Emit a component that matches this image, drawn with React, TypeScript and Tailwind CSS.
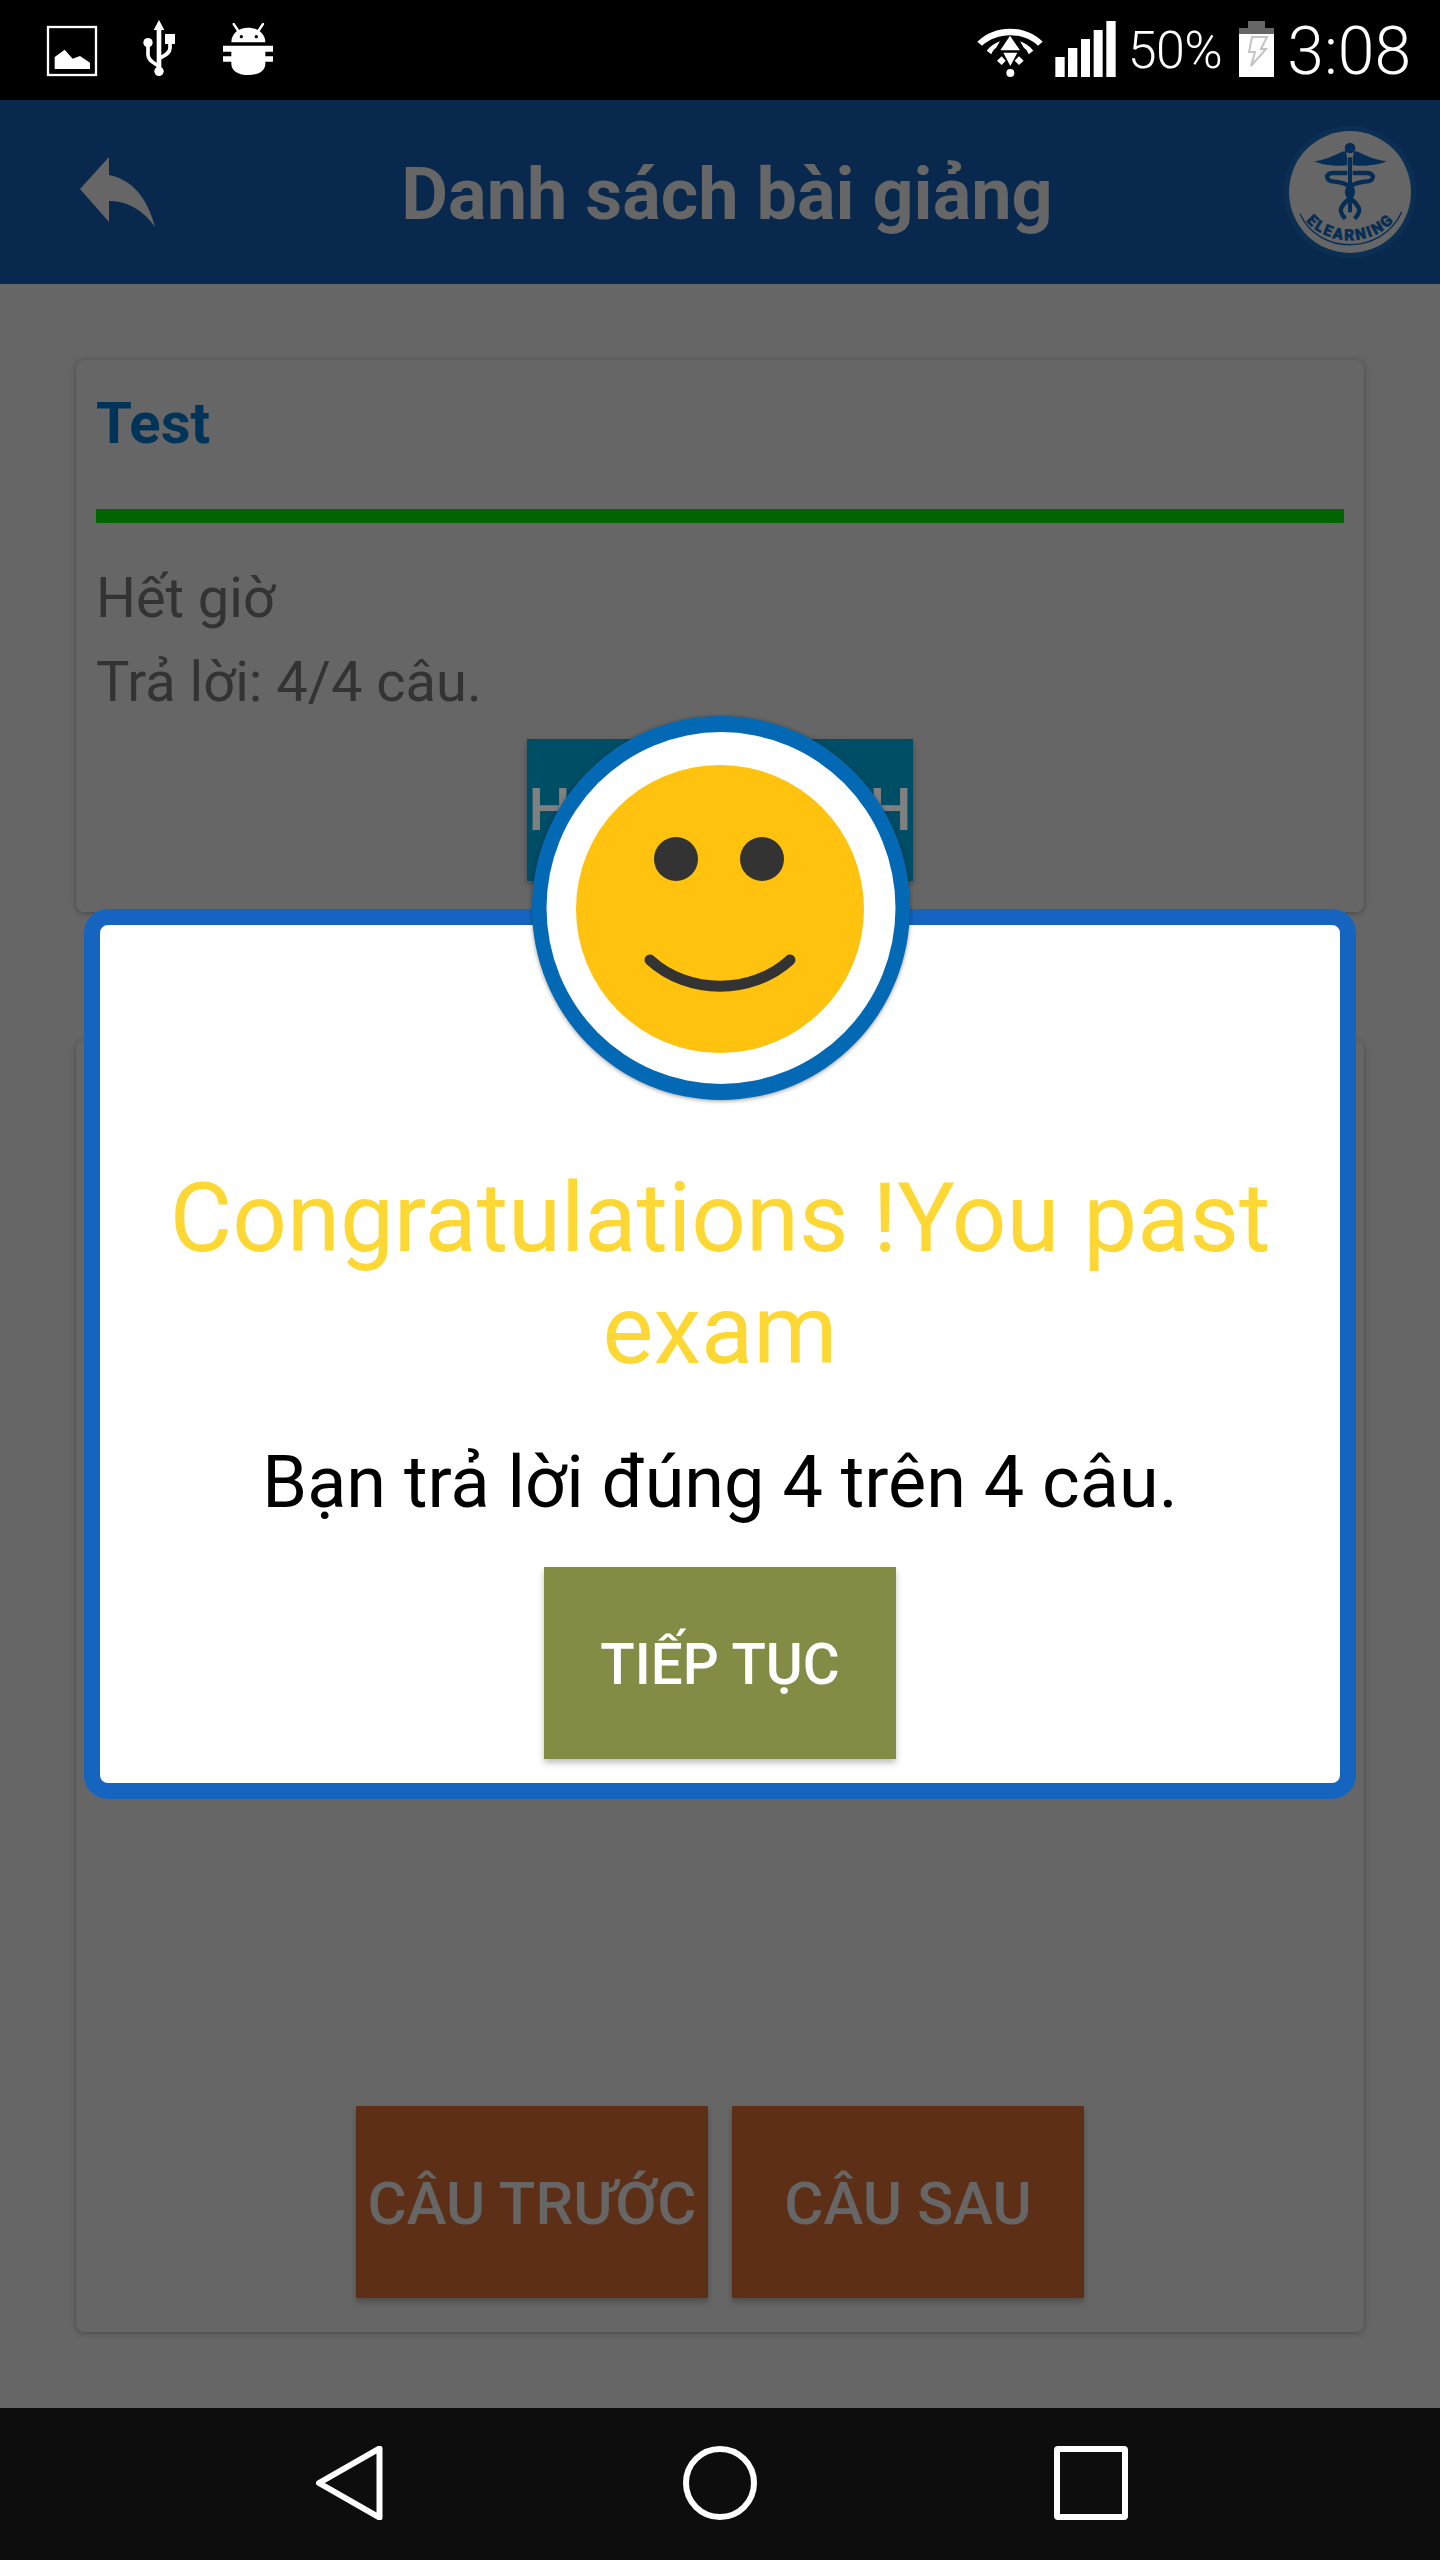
import React from "react";

function LeftStatusIcons() {
  return (
    <div className="flex items-start">
      {/* gallery */}
      <svg width="52" height="52" viewBox="0 0 156 156" className="ml-[46px] mt-[25px]">
        <rect x="6" y="6" width="144" height="144" fill="none" stroke="#fff" strokeWidth="7" />
        <path d="M26 132V96L56 74L80 101L102 93L132 113V132Z" fill="#fff" />
      </svg>
      {/* usb */}
      <svg width="36" height="58" viewBox="0 0 108 174" className="ml-[44px] mt-[20px]">
        <path d="M51 0L67 30H35Z" fill="#fff" />
        <rect x="44" y="26" width="14" height="124" fill="#fff" />
        <circle cx="51" cy="154" r="14" fill="#fff" />
        <circle cx="18" cy="68" r="14" fill="#fff" />
        <path d="M18 76V104C18 122 36 128 50 138" fill="none" stroke="#fff" strokeWidth="11" />
        <rect x="69" y="42" width="30" height="30" fill="#fff" />
        <path d="M84 70V84C84 100 68 106 54 114" fill="none" stroke="#fff" strokeWidth="11" />
      </svg>
      {/* android */}
      <svg width="50" height="54" viewBox="0 0 150 162" className="ml-[45px] mt-[23px]">
        <path d="M25 58C25 30 48 14 75 14C102 14 127 30 127 58Z" fill="#fff" />
        <path d="M32 3L46 24M120 3L106 24" stroke="#fff" strokeWidth="7" strokeLinecap="round" />
        <circle cx="55" cy="41" r="5" fill="#000" />
        <circle cx="100" cy="41" r="5" fill="#000" />
        <path d="M0 68H150V86H127V100H150V116H127V122C127 145 104 156 76 156C48 156 25 145 25 122V116H0V100H25V86H0Z" fill="#fff" />
      </svg>
    </div>
  );
}

function WifiSignal() {
  return (
    <svg width="148" height="70" viewBox="0 0 444 210" className="shrink-0">
      <path d="M22 80C75 28 165 28 218 80L204 92C158 50 82 50 36 92Z" fill="#fff" />
      <path d="M50 107C62 92 76 84 90 79L78 99C72 102 68 108 64 118Z" fill="#fff" />
      <path d="M190 107C178 92 164 84 150 79L162 99C168 102 172 108 176 118Z" fill="#fff" />
      <path d="M120 62L150 106H91Z" fill="#fff" />
      <path d="M100 113H142L121 153Z" fill="#fff" />
      <path d="M95 124L107 137L95 150L81 137Z" fill="#fff" />
      <path d="M147 124L161 137L147 150L134 137Z" fill="#fff" />
      <circle cx="121" cy="174" r="12" fill="#fff" />
      <rect x="256" y="126" width="28" height="60" fill="#fff" />
      <rect x="294" y="99" width="28" height="87" fill="#fff" />
      <rect x="333" y="72" width="27" height="114" fill="#fff" />
      <rect x="371" y="45" width="27" height="141" fill="#fff" />
      <rect x="409" y="18" width="28" height="168" fill="#fff" />
    </svg>
  );
}

function Battery() {
  return (
    <svg width="35" height="56" viewBox="0 0 35 56" className="shrink-0">
      <rect x="9" y="0" width="17" height="7" fill="#666" />
      <rect x="0" y="7" width="35" height="6" fill="#666" />
      <rect x="0" y="13" width="35" height="43" fill="#fff" />
      <path d="M13 16H28L22 28H27L12 45L16 31H10Z" fill="#fff" stroke="#c4c4c4" strokeWidth="2" />
    </svg>
  );
}

function BackArrow() {
  return (
    <svg width="75" height="70" viewBox="0 0 75 70" className="ml-[80px] shrink-0">
      <path d="M0 32L29 0V18C52 22 68 42 75 70C64 54 48 44 29 44V65Z" fill="#666" />
    </svg>
  );
}

function Logo() {
  const c = "#062d55";
  return (
    <svg width="136" height="136" viewBox="0 0 408 408" className="shrink-0">
      <circle cx="204" cy="204" r="199" fill="#0a2f52" />
      <circle cx="204" cy="204" r="183" fill="#666" />
      <circle cx="204" cy="72" r="16" fill={c} />
      <path d="M192 82C170 82 150 106 97 112C120 124 170 128 196 124V104Z" fill={c} />
      <path d="M216 82C238 82 258 106 314 112C290 124 238 128 212 124V104Z" fill={c} />
      <rect x="198" y="100" width="12" height="165" fill={c} />
      <path d="M196 147H152C130 147 130 171 152 172C172 174 190 176 204 188C216 198 216 210 204 222C190 234 176 246 176 260C178 270 184 278 190 284" fill="none" stroke={c} strokeWidth="13" />
      <path d="M212 147H256C278 147 278 171 256 172C236 174 218 176 204 188C192 198 192 210 204 222C218 234 232 246 232 260C230 270 224 278 218 284" fill="none" stroke={c} strokeWidth="13" />
      <defs>
        <path id="logoArc" d="M58 268C112 376 298 376 352 264" />
      </defs>
      <text fontFamily="Roboto, sans-serif" fontWeight="900" fontSize="46" fill={c} stroke={c} strokeWidth="1.5" letterSpacing="6" textAnchor="middle">
        <textPath href="#logoArc" startOffset="50%">ELEARNING</textPath>
      </text>
      <path d="M54 269C110 394 300 394 359 264" fill="none" stroke={c} strokeWidth="4" />
    </svg>
  );
}

function Smiley() {
  return (
    <svg width="386" height="386" viewBox="0 0 386 386" className="drop-shadow-[0_1px_2px_rgba(0,0,0,0.4)]">
      <ellipse cx="193" cy="193" rx="189" ry="192" fill="#0469b5" />
      <ellipse cx="193" cy="193" rx="174.5" ry="176" fill="#fff" />
      <circle cx="192" cy="194" r="144" fill="#fec20f" />
      <circle cx="148" cy="144" r="22" fill="#333" />
      <circle cx="234" cy="144" r="22" fill="#333" />
      <path d="M122 245C160 280 224 280 262 245" fill="none" stroke="#333" strokeWidth="11" strokeLinecap="round" />
    </svg>
  );
}

function NavIcons() {
  return (
    <div className="flex h-[152px] items-center justify-center gap-[297px] bg-[#0d0d0d] pb-[2px]">
      <svg width="74" height="74" viewBox="0 0 74 74">
        <path d="M67.500 2.500V71.500L7 37Z" fill="none" stroke="#fff" strokeWidth="6" strokeLinejoin="round" />
      </svg>
      <svg width="74" height="74" viewBox="0 0 74 74">
        <circle cx="37" cy="37" r="34" fill="none" stroke="#fff" strokeWidth="6" />
      </svg>
      <svg width="74" height="74" viewBox="0 0 74 74">
        <rect x="3" y="3" width="68" height="68" rx="1" fill="none" stroke="#fff" strokeWidth="6" />
      </svg>
    </div>
  );
}

export default function App() {
  return (
    <div className="relative flex h-[2560px] w-[1440px] flex-col overflow-hidden bg-[#666] font-['Roboto',sans-serif]">
      {/* status bar */}
      <div className="flex h-[100px] shrink-0 items-start justify-between bg-black text-white">
        <LeftStatusIcons />
        <div className="flex items-start pr-[29px] pt-[15px]">
          <WifiSignal />
          <span className="mt-[6px] ml-[10px] text-[52px] leading-[60px] font-light tracking-[-0.5px]">50%</span>
          <div className="mt-[6px] ml-[17px]"><Battery /></div>
          <span className="ml-[13px] mt-[5px] text-[66px] leading-[64px] font-light">3:08</span>
        </div>
      </div>

      {/* app bar */}
      <div className="flex h-[184px] shrink-0 items-center bg-[#08284e]">
        <BackArrow />
        <h1 className="flex-1 pl-[17px] pt-[6px] text-center text-[72px] leading-[80px] font-bold text-[#666]">Danh sách bài giảng</h1>
        <div className="mr-[22px]"><Logo /></div>
      </div>

      {/* page */}
      <div className="flex flex-1 flex-col px-[76px] pt-[76px]">
        <section className="h-[552px] rounded-[8px] pt-[31px] shadow-[0_1px_6px_rgba(0,0,0,0.3)]">
          <h2 className="px-[20px] text-[58px] leading-[64px] font-bold text-[#003358]">Test</h2>
          <div className="mx-[20px] mt-[54px] h-[14px] bg-[#006400]" />
          <div className="mt-[33px] px-[20px] text-[56px] leading-[84px] text-[#333]">
            <p>Hết giờ</p>
            <p>Trả lời: 4/4 câu.</p>
          </div>
          <div className="mx-auto mt-[15px] flex h-[142px] w-[386px] items-center justify-center bg-[#004d66] text-[60px] font-medium whitespace-nowrap text-[#808080] shadow-[0_3px_6px_rgba(0,0,0,0.3)]">
            HOÀN THÀNH
          </div>
        </section>

        <section className="mt-[129px] flex h-[1291px] items-end justify-center gap-[24px] rounded-[8px] pb-[34px] shadow-[0_1px_6px_rgba(0,0,0,0.3)]">
          <div className="flex h-[192px] w-[352px] items-center justify-center bg-[#5c2f16] pt-[4px] text-[60px] font-medium whitespace-nowrap text-[#666] shadow-[0_4px_6px_rgba(0,0,0,0.25)]">CÂU TRƯỚC</div>
          <div className="flex h-[192px] w-[352px] items-center justify-center bg-[#5c2f16] pt-[4px] text-[60px] font-medium whitespace-nowrap text-[#666] shadow-[0_4px_6px_rgba(0,0,0,0.25)]">CÂU SAU</div>
        </section>
      </div>

      <NavIcons />

      {/* dialog */}
      <div className="absolute top-[909px] left-[84px] h-[890px] w-[1272px] rounded-[24px] border-[16px] border-[#1565c0] bg-white px-[40px] pt-[237px] text-center">
        <p className="text-[96px] leading-[112px] text-[#fdd835]">Congratulations !You past exam</p>
        <p className="mt-[55px] text-[72px] leading-[84px] text-black">Bạn trả lời đúng 4 trên 4 câu.</p>
        <div className="mx-auto mt-[42px] flex h-[192px] w-[352px] items-center justify-center bg-[#838b44] pt-[4px] text-[56.5px] font-medium text-white shadow-[0_4px_6px_rgba(0,0,0,0.25)]">TIẾP TỤC</div>
      </div>

      {/* smiley badge */}
      <div className="absolute top-[715px] left-[528px]">
        <Smiley />
      </div>
    </div>
  );
}
